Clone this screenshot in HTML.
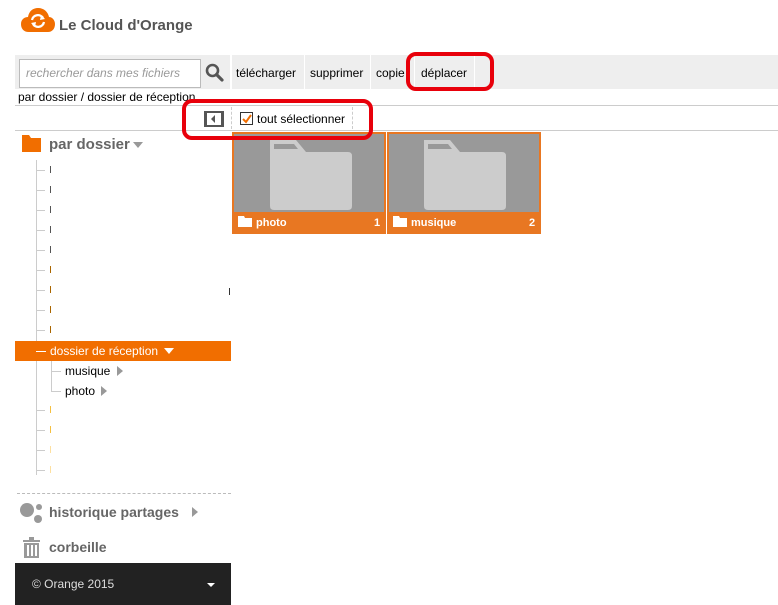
<!DOCTYPE html>
<html><head><meta charset="utf-8"><style>
*{margin:0;padding:0;box-sizing:border-box}
body{width:778px;height:605px;background:#fff;font-family:"Liberation Sans",sans-serif;position:relative;overflow:hidden;color:#000}
.a{position:absolute}
.t{font-size:12px;white-space:nowrap}
.hl{position:absolute;height:1px;background:#ccc}
.vl{position:absolute;width:1px;background:#ccc}
.red{position:absolute;border:4px solid #e8000b;border-radius:10px}
.tick{position:absolute;left:36px;width:9px;height:1px;background:#ccc}
.stub{position:absolute;left:50px;width:1px;height:7px}
</style></head><body>
<svg class="a" style="left:21px;top:7px" width="34" height="26" viewBox="0 0 34 26"><path d="M8 25 C2 25 0 21 0 17 C0 12 4 10 7 10 C8 4 12 1 17 1 C23 1 27 5 28 10 C31 10 34 13 34 17 C34 22 31 25 27 25Z" fill="#f16e00"/><path d="M11 13 A6 6 0 0 1 22 11 M23 15 A6 6 0 0 1 12 17" stroke="#fff" stroke-width="2.3" fill="none"/><path d="M20 8 L24 12 L19 13Z M14 20 L10 16 L15 15Z" fill="#fff"/></svg>
<div class="a" style="left:59px;top:17px;font-size:15px;font-weight:bold;color:#555">Le Cloud d'Orange</div>

<div class="a" style="left:15px;top:55px;width:763px;height:34px;background:#eee"></div>
<div class="a" style="left:19px;top:59px;width:182px;height:29px;background:#fff;border:1px solid #bbb"></div>
<div class="a t" style="left:26px;top:66px;color:#999;font-style:italic">rechercher dans mes fichiers</div>
<svg class="a" style="left:205px;top:63px" width="19" height="19" viewBox="0 0 19 19"><circle cx="7.5" cy="7.5" r="5.5" stroke="#555" stroke-width="2.6" fill="none"/><path d="M11.5 11.5 L17 17" stroke="#555" stroke-width="3.2" stroke-linecap="round"/></svg>
<div class="a" style="left:230px;top:55px;width:2px;height:34px;background:#fff"></div>
<div class="a t" style="left:236px;top:66px">télécharger</div>
<div class="a" style="left:304px;top:55px;width:1px;height:34px;background:#fff"></div>
<div class="a t" style="left:310px;top:66px">supprimer</div>
<div class="a" style="left:370px;top:55px;width:1px;height:34px;background:#fff"></div>
<div class="a t" style="left:376px;top:66px">copie</div>
<div class="a" style="left:414px;top:55px;width:1px;height:34px;background:#fff"></div>
<div class="a t" style="left:421px;top:66px">déplacer</div>
<div class="a" style="left:474px;top:55px;width:1px;height:34px;background:#fff"></div>

<div class="a t" style="left:18px;top:90px">par dossier / dossier de réception</div>
<div class="hl" style="left:15px;top:105px;width:763px"></div>

<div class="a" style="left:204px;top:111px;width:20px;height:16px;background:#555"></div>
<div class="a" style="left:207px;top:113px;width:14px;height:12px;background:#fff"></div>
<div class="a" style="left:211px;top:115px;width:0;height:0;border-top:4px solid transparent;border-bottom:4px solid transparent;border-right:4px solid #555"></div>
<div class="a" style="left:231px;top:107px;height:22px;border-left:1px dashed #ccc"></div>
<div class="a" style="left:240px;top:112px;width:13px;height:13px;border:1px solid #333;background:#fff"></div>
<svg class="a" style="left:241px;top:113px" width="12" height="12"><path d="M2 6 L5 9 L10 2" stroke="#f16e00" stroke-width="2" fill="none"/></svg>
<div class="a t" style="left:257px;top:112px">tout sélectionner</div>
<div class="a" style="left:352px;top:107px;height:22px;border-left:1px dashed #ccc"></div>
<div class="hl" style="left:15px;top:130px;width:763px"></div>

<div class="a" style="left:232px;top:132px;width:154px;height:102px;background:#e87722"></div>
<div class="a" style="left:234px;top:134px;width:150px;height:78px;background:#999"></div>
<svg class="a" style="left:268px;top:140px" width="86" height="70"><path d="M2 0 H28 L38 12 H80 Q84 12 84 16 V66 Q84 70 80 70 H6 Q2 70 2 66Z" fill="#ccc"/><path d="M6 4 H26 L30 9 H6Z" fill="#999"/></svg>
<svg class="a" style="left:238px;top:216px" width="14" height="11"><path d="M0 0 H6 L7 2 H14 V11 H0Z" fill="#fff"/></svg>
<div class="a t" style="left:256px;top:217px;color:#fff;font-weight:bold;font-size:11px">photo</div>
<div class="a t" style="left:374px;top:217px;color:#fff;font-weight:bold;font-size:11px">1</div>

<div class="a" style="left:387px;top:132px;width:154px;height:102px;background:#e87722"></div>
<div class="a" style="left:389px;top:134px;width:150px;height:78px;background:#999"></div>
<svg class="a" style="left:422px;top:140px" width="86" height="70"><path d="M2 0 H28 L38 12 H80 Q84 12 84 16 V66 Q84 70 80 70 H6 Q2 70 2 66Z" fill="#ccc"/><path d="M6 4 H26 L30 9 H6Z" fill="#999"/></svg>
<svg class="a" style="left:393px;top:216px" width="14" height="11"><path d="M0 0 H6 L7 2 H14 V11 H0Z" fill="#fff"/></svg>
<div class="a t" style="left:411px;top:217px;color:#fff;font-weight:bold;font-size:11px">musique</div>
<div class="a t" style="left:529px;top:217px;color:#fff;font-weight:bold;font-size:11px">2</div>

<div class="red" style="left:406px;top:52px;width:88px;height:39px"></div>
<div class="red" style="left:182px;top:99px;width:191px;height:41px"></div>

<svg class="a" style="left:22px;top:135px" width="19" height="17"><path d="M0 0 H7 L9 3 H19 V17 H0Z" fill="#f16e00"/></svg>
<div class="a" style="left:49px;top:136px;font-size:15px;font-weight:bold;color:#666">par dossier</div>
<div class="a" style="left:133px;top:142px;border-left:5px solid transparent;border-right:5px solid transparent;border-top:6px solid #999"></div>

<div class="vl" style="left:36px;top:160px;height:315px"></div>
<div class="tick" style="top:170px"></div><div class="stub" style="top:166px;background:#555"></div>
<div class="tick" style="top:190px"></div><div class="stub" style="top:186px;background:#555"></div>
<div class="tick" style="top:210px"></div><div class="stub" style="top:206px;background:#555"></div>
<div class="tick" style="top:230px"></div><div class="stub" style="top:226px;background:#555"></div>
<div class="tick" style="top:250px"></div><div class="stub" style="top:246px;background:#555"></div>
<div class="tick" style="top:270px"></div><div class="stub" style="top:266px;background:#a60"></div>
<div class="tick" style="top:290px"></div><div class="stub" style="top:286px;background:#a60"></div>
<div class="tick" style="top:310px"></div><div class="stub" style="top:306px;background:#a60"></div>
<div class="tick" style="top:330px"></div><div class="stub" style="top:326px;background:#a60"></div>
<div class="a" style="left:229px;top:288px;width:1px;height:7px;background:#333"></div>
<div class="a" style="left:15px;top:341px;width:216px;height:20px;background:#f16e00"></div>
<div class="a" style="left:36px;top:351px;width:10px;height:1px;background:#fff"></div>
<div class="a t" style="left:50px;top:344px;color:#fff">dossier de réception</div>
<div class="a" style="left:164px;top:348px;border-left:5px solid transparent;border-right:5px solid transparent;border-top:6px solid #fff"></div>
<div class="vl" style="left:51px;top:361px;height:30px"></div>
<div class="a" style="left:51px;top:371px;width:10px;height:1px;background:#ccc"></div>
<div class="a t" style="left:65px;top:364px">musique</div>
<div class="a" style="left:117px;top:366px;border-top:5px solid transparent;border-bottom:5px solid transparent;border-left:6px solid #999"></div>
<div class="a" style="left:51px;top:391px;width:10px;height:1px;background:#ccc"></div>
<div class="a t" style="left:65px;top:384px">photo</div>
<div class="a" style="left:101px;top:386px;border-top:5px solid transparent;border-bottom:5px solid transparent;border-left:6px solid #999"></div>
<div class="tick" style="top:410px"></div><div class="stub" style="top:406px;background:#f5c040"></div>
<div class="tick" style="top:430px"></div><div class="stub" style="top:426px;background:#f5c040"></div>
<div class="tick" style="top:450px"></div><div class="stub" style="top:446px;background:#fde0a0"></div>
<div class="tick" style="top:470px"></div><div class="stub" style="top:466px;background:#fde0a0"></div>

<div class="a" style="left:17px;top:493px;width:214px;border-top:1px dashed #bbb"></div>
<svg class="a" style="left:20px;top:502px" width="24" height="21"><circle cx="7" cy="8" r="7" fill="#999"/><circle cx="19" cy="5" r="3" fill="#999"/><circle cx="18" cy="17" r="4" fill="#999"/></svg>
<div class="a" style="left:49px;top:504px;font-size:14px;font-weight:bold;color:#666">historique partages</div>
<div class="a" style="left:192px;top:507px;border-top:5px solid transparent;border-bottom:5px solid transparent;border-left:6px solid #999"></div>
<svg class="a" style="left:23px;top:537px" width="17" height="21"><rect x="0" y="3" width="17" height="2" fill="#999"/><rect x="6" y="0" width="5" height="3" fill="#999"/><rect x="1" y="6" width="15" height="15" fill="#999"/><rect x="4" y="8" width="2" height="11" fill="#fff"/><rect x="8" y="8" width="2" height="11" fill="#fff"/><rect x="12" y="8" width="2" height="11" fill="#fff"/></svg>
<div class="a" style="left:49px;top:539px;font-size:14px;font-weight:bold;color:#666">corbeille</div>

<div class="a" style="left:15px;top:563px;width:216px;height:42px;background:#222"></div>
<div class="a t" style="left:32px;top:577px;color:#ddd">© Orange 2015</div>
<div class="a" style="left:207px;top:583px;border-left:4px solid transparent;border-right:4px solid transparent;border-top:4px solid #fff"></div>
</body></html>
